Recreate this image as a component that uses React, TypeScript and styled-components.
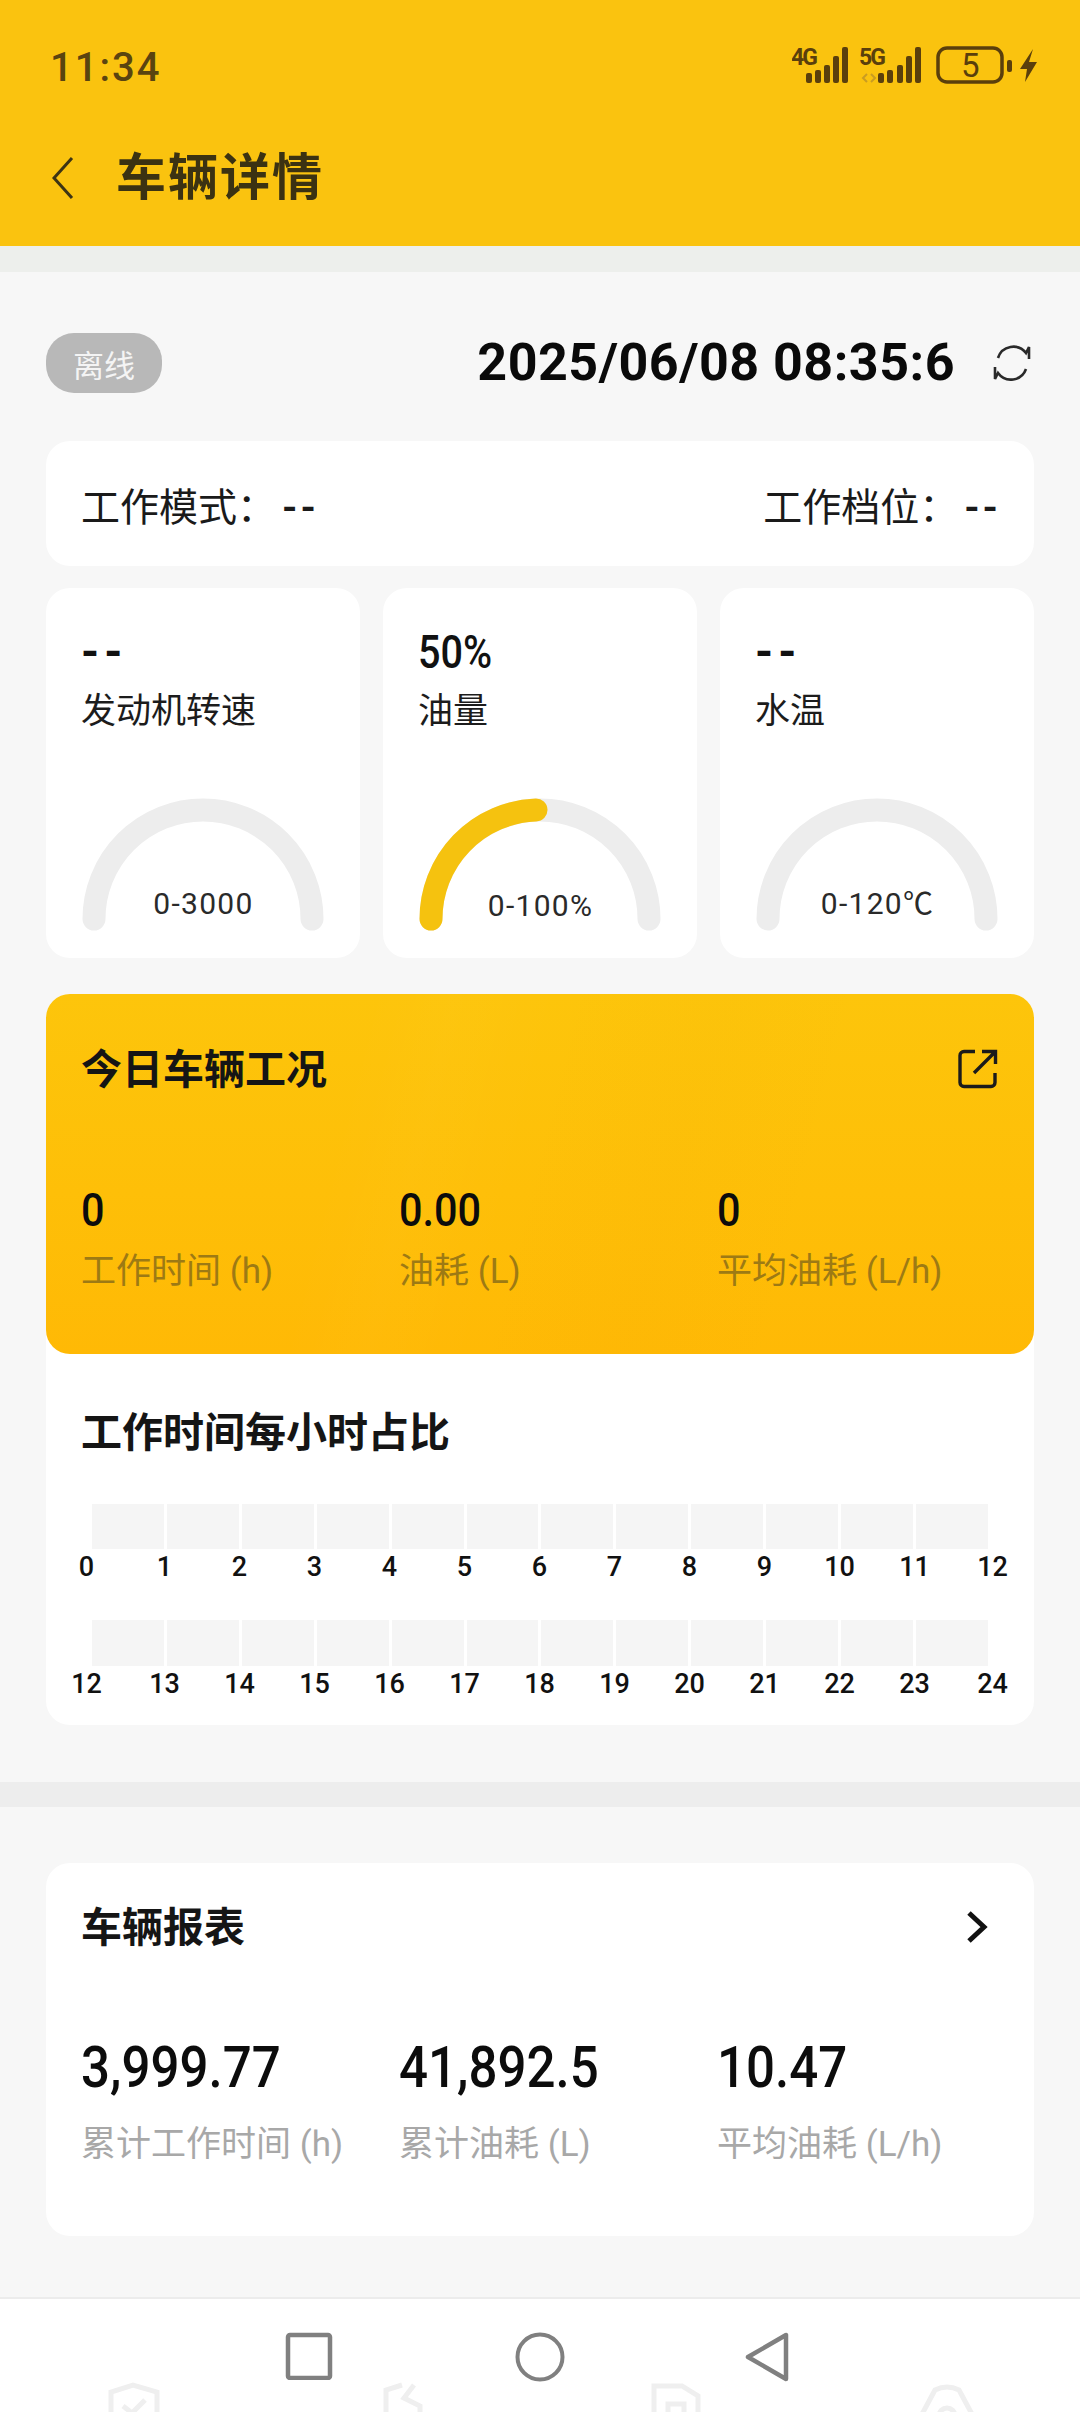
import React from "react";
import styled, { createGlobalStyle } from "styled-components";

const Global = createGlobalStyle`
  html, body { margin: 0; padding: 0; background: #f7f7f7; }
  * { box-sizing: border-box; }
`;
const cjk = `Roboto, "Noto Sans CJK SC", sans-serif`;

const Page = styled.div`
  width: 1080px; height: 2412px; overflow: hidden; background: #f7f7f7;
  display: flex; flex-direction: column; font-family: ${cjk}; color: #111;
`;
const Header = styled.header`
  height: 246px; background: #fac30f; flex: none; display: flex; flex-direction: column;
`;
const StatusBar = styled.div`
  height: 136px; display: flex; justify-content: space-between; align-items: flex-start;
  padding: 46px 38px 0 50px;
`;
const StatusIcons = styled.svg`
  margin-top: -8px;
`;
const Clock = styled.span`
  font-size: 40px; line-height: 44px; font-weight: 500; color: #5a4410; letter-spacing: 2px;
`;
const TitleRow = styled.div`
  display: flex; align-items: center; gap: 42px; padding-left: 52px; height: 84px;
`;
const PageTitle = styled.h1`
  margin: 0; font-size: 50px; line-height: 84px; font-weight: 700; color: #3b3212; letter-spacing: 2px;
`;
const Strip = styled.div<{ $h: number; $c: string }>`
  height: ${p => p.$h}px; background: ${p => p.$c}; flex: none;
`;
const Section = styled.section<{ $top: number; $bottom: number }>`
  padding: ${p => p.$top}px 46px ${p => p.$bottom}px; flex: none;
`;
const TopRow = styled.div`
  display: flex; align-items: center; height: 60px; justify-content: space-between; margin-bottom: 48px;
`;
const Badge = styled.span`
  width: 116px; height: 60px; border-radius: 28px; background: #b8b8b8; color: #f4f4f4;
  font-size: 31px; display: flex; align-items: center; justify-content: center;
`;
const TimeWrap = styled.div`
  display: flex; align-items: center; gap: 38px; padding-right: 3px;
`;
const TimeText = styled.span`
  font-size: 52px; font-weight: 700; color: #0a0a0a; letter-spacing: .5px; line-height: 60px;
`;
const ModeCard = styled.div`
  height: 125px; background: #fff; border-radius: 24px; display: flex; align-items: center;
  justify-content: space-between; padding: 0 33px 0 35px; font-size: 39px; color: #1a1a1a;
  margin-bottom: 22px;
`;
const Dash = styled.b`
  font-weight: 700; font-size: 39px; letter-spacing: 3px; margin-left: 6px;
`;
const GaugeGrid = styled.div`
  display: grid; grid-template-columns: 314px 314px 314px; gap: 23px; margin-bottom: 36px;
`;
const GaugeCard = styled.div`
  height: 370px; background: #fff; border-radius: 24px; padding: 36px 36px 0;
  display: flex; flex-direction: column;
`;
const GaugeValue = styled.div<{ $dash?: boolean }>`
  font-size: 46px; line-height: 56px; height: 56px; color: #111; margin-left: -1px;
  font-weight: ${p => (p.$dash ? 700 : 500)};
  letter-spacing: ${p => (p.$dash ? 5 : 0)}px;
  transform: ${p => (p.$dash ? "none" : "scaleX(.86)")}; transform-origin: left center;
`;
const GaugeLabel = styled.div`
  font-size: 35px; line-height: 50px; margin: 7px 0 0 -1px; color: #1c1c1c; white-space: nowrap;
`;
const GaugeBox = styled.div`
  margin-top: 61px; width: 243px; height: 133px; display: grid;
  & > * { grid-area: 1 / 1; }
`;
const GaugeRange = styled.span<{ $drop: number }>`
  align-self: end; justify-self: center; font-size: 30px; line-height: 36px; color: #2a2a2a;
  letter-spacing: 1.3px; margin-bottom: ${p => 9 - p.$drop}px;
`;
const WorkCard = styled.div`
  background: #fff; border-radius: 24px; height: 731px;
`;
const YellowPanel = styled.div`
  height: 360px; border-radius: 24px; padding: 50px 36px 0 35px;
  background:
    linear-gradient(104deg, transparent 30%, rgba(255,255,255,.015) 38%, transparent 48%, rgba(200,120,0,.02) 62%, transparent 76%),
    linear-gradient(180deg, #fdc50b 0%, #febf08 55%, #ffb905 100%);
`;
const PanelHead = styled.div`
  display: flex; justify-content: space-between; align-items: center; height: 50px;
`;
const SectionTitle = styled.h2`
  margin: 0; padding-top: 2px; font-size: 41px; line-height: 50px; font-weight: 700; color: #151515;
  white-space: nowrap;
`;
const ArrowSlot = styled.span`
  display: flex; margin-right: 9px;
`;
const Stats = styled.div<{ $gap: number }>`
  display: grid; grid-template-columns: 318px 318px 1fr; margin-top: ${p => p.$gap}px;
`;
const StatValue = styled.div<{ $big?: boolean }>`
  font-size: ${p => (p.$big ? 58 : 46)}px; line-height: ${p => (p.$big ? 64 : 50)}px; font-weight: 500;
  color: #0c0c0c; transform: scaleX(${p => (p.$big ? 0.88 : 0.9)}); transform-origin: left center; white-space: nowrap;
`;
const StatLabel = styled.div<{ $c: string; $gap: number }>`
  font-size: 35px; line-height: 44px; color: ${p => p.$c}; margin-top: ${p => p.$gap}px; white-space: nowrap;
`;
const HoursPanel = styled.div`
  padding-top: 52px;
`;
const HoursTitle = styled(SectionTitle)`
  margin: 0 35px 46px;
`;
const BarRow = styled.div<{ $h: number }>`
  display: grid; grid-template-columns: repeat(12, 1fr); gap: 3px; margin: 0 46px; height: ${p => p.$h}px;
`;
const Cell = styled.div`
  background: #f5f5f5;
`;
const TickRow = styled.div`
  display: grid; grid-template-columns: 81px repeat(11, 75px) 81px; height: 36px; margin-bottom: 35px;
  font-size: 27px; line-height: 36px; text-align: center; color: #111; font-weight: 500;
`;
const ReportCard = styled.div`
  height: 373px; background: #fff; border-radius: 24px; padding: 39px 36px 0 35px;
`;
const BottomNav = styled.nav`
  flex: 1; background: #fff; border-top: 2px solid #ececec; position: relative;
  display: flex; justify-content: flex-start; gap: 180px; padding: 33px 0 0 285px;
`;
const Ghosts = styled.div`
  position: absolute; left: 107px; right: 105px; bottom: -4px; display: flex; justify-content: space-between;
`;

const Status = () => (
  <StatusIcons width="250" height="50" viewBox="792 40 250 50">
    <g fill="#5a3f0c">
      <text x="791" y="67" fontFamily="Roboto" fontSize="23" fontWeight="700" textLength="27">4G</text>
      <text x="859" y="67" fontFamily="Roboto" fontSize="23" fontWeight="700" textLength="27">5G</text>
      {[[806, 75], [815, 72], [824, 67], [833, 58], [842, 49]].map(([x, y]) => <rect key={x} x={x} y={y} width="6" height={85 - y} rx="2" />)}
      {[[878, 75], [887, 72], [897, 67], [906, 58], [915, 49]].map(([x, y]) => <rect key={x} x={x} y={y} width="6" height={85 - y} rx="2" />)}
      <rect x="1007" y="62" width="5" height="12" rx="2" />
      <path d="M1033 51 L1020 71 H1027 L1025 84 L1037 64 H1029 Z" />
      <text x="961" y="79" fontFamily="Roboto" fontSize="33" textLength="18">5</text>
    </g>
    <rect x="938" y="50" width="64" height="34" rx="9" fill="none" stroke="#5a3f0c" strokeWidth="3.5" />
    <path d="M867 76l-4 4 4 4M871 76l4 4-4 4" stroke="#c99c22" strokeWidth="2" fill="none" />
  </StatusIcons>
);
const Back = () => (
  <svg width="22" height="44" viewBox="0 0 22 44">
    <path d="M20 2 L2 22 L20 42" fill="none" stroke="#3d3414" strokeWidth="3" />
  </svg>
);
const Refresh = () => (
  <svg width="38" height="38" viewBox="0 0 38 38" fill="none" stroke="#2a2a2a" strokeWidth="2.6">
    <path d="M5 14 A16 16 0 0 1 33 9 L36 3 L36 15" />
    <path d="M33 25 A16 16 0 0 1 5 29 L2 35 L2 23" />
  </svg>
);
const Gauge = ({ filled, range, drop = 0 }: { filled?: boolean; range: string; drop?: number }) => (
  <GaugeBox>
    <svg width="243" height="133" viewBox="0 0 243 133" fill="none" strokeWidth="23" strokeLinecap="round">
      <path d="M12 121 A109 109 0 0 1 230 121" stroke="#ededed" />
      {filled && <path d="M12 121 A109 109 0 0 1 117 12" stroke="#f5c20f" />}
    </svg>
    <GaugeRange $drop={drop}>{range}</GaugeRange>
  </GaugeBox>
);
const Share = () => (
  <svg width="40" height="40" viewBox="0 0 40 40" fill="none" stroke="#1b1b1b" strokeWidth="3.4">
    <path d="M17 2.5 H6 A4 4 0 0 0 2 6.5 V33.5 A4 4 0 0 0 6 37.5 H33 A4 4 0 0 0 37 33.5 V24" />
    <path d="M16 24 L37 3 M24 2.5 H37.5 V15" />
  </svg>
);
const Chevron = () => (
  <svg width="24" height="34" viewBox="0 0 24 34">
    <path d="M4 3 L19 17 L4 31" fill="none" stroke="#111" strokeWidth="5" />
  </svg>
);
const NavIcons = () => (
  <>
    <svg width="50" height="48" viewBox="0 0 50 48"><rect x="3" y="3" width="42" height="43" rx="2" fill="none" stroke="#808080" strokeWidth="4.5" /></svg>
    <svg width="50" height="50" viewBox="0 0 50 50"><circle cx="25" cy="25" r="22.5" fill="none" stroke="#808080" strokeWidth="4" /></svg>
    <svg width="44" height="50" viewBox="0 0 44 50"><path d="M41 3 V47 L3 25 Z" fill="none" stroke="#808080" strokeWidth="4.5" strokeLinejoin="round" /></svg>
  </>
);
const Ghost = ({ d }: { d: string }) => (
  <svg width="56" height="34" viewBox="0 0 56 34" fill="none" stroke="#efefef" strokeWidth="5"><path d={d} /></svg>
);

const hoursA = Array.from({ length: 13 }, (_, i) => i);
const cells = Array.from({ length: 12 }, (_, i) => i);

export default function App() {
  return (
    <Page>
      <Global />
      <Header>
        <StatusBar><Clock>11:34</Clock><Status /></StatusBar>
        <TitleRow><Back /><PageTitle>车辆详情</PageTitle></TitleRow>
      </Header>
      <Strip $h={26} $c="#edefec" />
      <Section $top={61} $bottom={57}>
        <TopRow>
          <Badge>离线</Badge>
          <TimeWrap><TimeText>2025/06/08 08:35:6</TimeText><Refresh /></TimeWrap>
        </TopRow>
        <ModeCard>
          <span>工作模式：<Dash>--</Dash></span>
          <span>工作档位：<Dash>--</Dash></span>
        </ModeCard>
        <GaugeGrid>
          <GaugeCard>
            <GaugeValue $dash>--</GaugeValue><GaugeLabel>发动机转速</GaugeLabel>
            <Gauge range="0-3000" />
          </GaugeCard>
          <GaugeCard>
            <GaugeValue>50%</GaugeValue><GaugeLabel>油量</GaugeLabel>
            <Gauge filled range="0-100%" drop={2} />
          </GaugeCard>
          <GaugeCard>
            <GaugeValue $dash>--</GaugeValue><GaugeLabel>水温</GaugeLabel>
            <Gauge range="0-120℃" />
          </GaugeCard>
        </GaugeGrid>
        <WorkCard>
          <YellowPanel>
            <PanelHead><SectionTitle>今日车辆工况</SectionTitle><Share /></PanelHead>
            <Stats $gap={91}>
              {[["0", "工作时间 (h)"], ["0.00", "油耗 (L)"], ["0", "平均油耗 (L/h)"]].map(([v, l]) => (
                <div key={l}><StatValue>{v}</StatValue><StatLabel $c="#9d7a14" $gap={15}>{l}</StatLabel></div>
              ))}
            </Stats>
          </YellowPanel>
          <HoursPanel>
            <HoursTitle>工作时间每小时占比</HoursTitle>
            <BarRow $h={45}>{cells.map(i => <Cell key={i} />)}</BarRow>
            <TickRow>{hoursA.map(i => <span key={i}>{i}</span>)}</TickRow>
            <BarRow $h={46}>{cells.map(i => <Cell key={i} />)}</BarRow>
            <TickRow>{hoursA.map(i => <span key={i}>{i + 12}</span>)}</TickRow>
          </HoursPanel>
        </WorkCard>
      </Section>
      <Strip $h={25} $c="#ededed" />
      <Section $top={56} $bottom={61}>
        <ReportCard>
          <PanelHead><SectionTitle>车辆报表</SectionTitle><ArrowSlot><Chevron /></ArrowSlot></PanelHead>
          <Stats $gap={83}>
            {[["3,999.77", "累计工作时间 (h)"], ["41,892.5", "累计油耗 (L)"], ["10.47", "平均油耗 (L/h)"]].map(([v, l]) => (
              <div key={l}><StatValue $big>{v}</StatValue><StatLabel $c="#a8a8a8" $gap={24}>{l}</StatLabel></div>
            ))}
          </Stats>
        </ReportCard>
      </Section>
      <BottomNav>
        <NavIcons />
        <Ghosts>
          <Ghost d="M4 34 V10 L26 3 L50 10 V34 M16 24 L25 31 L38 18" />
          <Ghost d="M8 34 V8 L24 3 M36 3 L26 16 L42 24 V34" />
          <Ghost d="M6 34 V4 H34 L50 14 V34 M20 34 V22 H36 V34" />
          <Ghost d="M2 34 L16 8 Q28 2 40 8 L54 34 M20 34 A8 8 0 0 1 36 34" />
        </Ghosts>
      </BottomNav>
    </Page>
  );
}
